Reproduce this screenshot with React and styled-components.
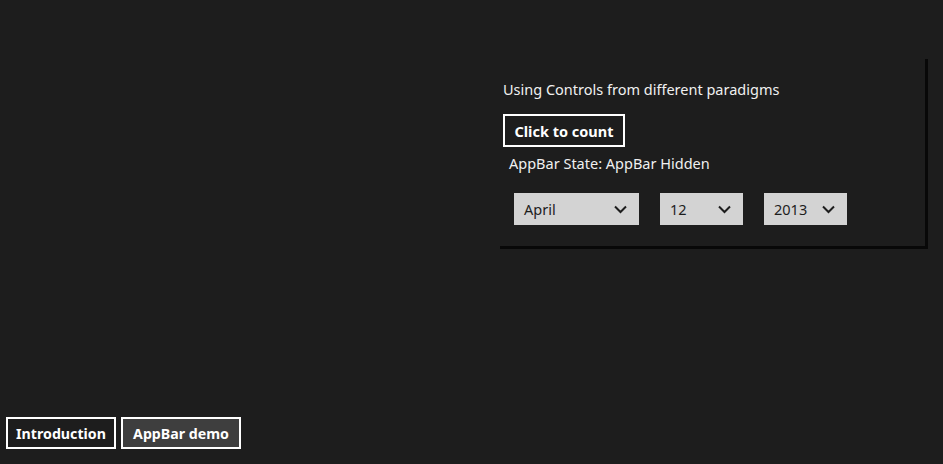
import React, { useState } from 'react'
import styled, { createGlobalStyle } from 'styled-components'

const colors = {
    page: '#1d1d1d',
    shadow: '#080808',
    white: '#ffffff',
    text: '#f0f0f0',
    selectBg: '#d3d3d3',
    selectText: '#1d1d1d',
    activeTab: '#3e3e3e',
}

const GlobalStyle = createGlobalStyle`
    html, body {
        margin: 0;
        padding: 0;
        background: ${colors.page};
        font-family: 'Noto Sans', 'Open Sans', sans-serif;
        color: ${colors.text};
    }
`

const PageComp = styled.div`
    width: 943px;
    height: 464px;
    display: flex;
    flex-direction: column;
    justify-content: space-between;
    box-sizing: border-box;
    padding: 59px 0 15px 0;
`

const PanelComp = styled.div`
    margin-left: 500px;
    width: 428px;
    height: 190px;
    border-right: 3px solid ${colors.shadow};
    border-bottom: 3px solid ${colors.shadow};
    padding: 19px 0 0 3px;
    box-sizing: border-box;
    display: flex;
    flex-direction: column;
    align-items: flex-start;
`

const Title = styled.div`
    font-size: 14.5px;
    line-height: 22px;
    height: 22px;
`

const CountButton = styled.button`
    margin-top: 14px;
    height: 33px;
    width: 122px;
    box-sizing: border-box;
    border: 2px solid ${colors.white};
    background: transparent;
    color: ${colors.white};
    font-family: inherit;
    font-size: 14.5px;
    font-weight: 700;
    padding: 0;
    cursor: pointer;
`

const StateText = styled.div`
    margin: 6px 0 0 6px;
    font-size: 14.5px;
    line-height: 20px;
`

const PickerRow = styled.div`
    display: flex;
    gap: 21px;
    margin: 20px 0 0 11px;
`

const Select = styled.div`
    width: ${props => props.$width}px;
    height: 32px;
    box-sizing: border-box;
    background: ${colors.selectBg};
    color: ${colors.selectText};
    display: flex;
    align-items: center;
    justify-content: space-between;
    padding: 0 12px 0 10px;
    font-size: 14.5px;
`

const NavBar = styled.div`
    display: flex;
    gap: 5px;
    padding-left: 6px;
`

const NavButton = styled.div`
    width: ${props => props.$width}px;
    height: 32px;
    box-sizing: border-box;
    border: 2px solid ${colors.white};
    background-color: ${colors.page};
    color: ${colors.white};
    font-size: 14.2px;
    font-weight: 700;
    display: flex;
    align-items: center;
    justify-content: center;
    cursor: pointer;
`

const ActiveNavButton = styled(NavButton)`
    background-color: ${colors.activeTab};
`

const Chevron = () => (
    <svg width='13' height='9' viewBox='0 0 13 9'>
        <path d='M1 1.5 L6.5 7 L12 1.5' fill='none' stroke='#1d1d1d' strokeWidth='2' />
    </svg>
)

function App() {
    const [count, setCount] = useState(0)

    return (
        <PageComp>
            <GlobalStyle />
            <PanelComp>
                <Title>Using Controls from different paradigms</Title>
                <CountButton onClick={() => setCount(count + 1)}>
                    {count > 0 ? `Clicked ${count}` : 'Click to count'}
                </CountButton>
                <StateText>AppBar State: AppBar Hidden</StateText>
                <PickerRow>
                    <Select $width={125}>April <Chevron /></Select>
                    <Select $width={83}>12 <Chevron /></Select>
                    <Select $width={83}>2013 <Chevron /></Select>
                </PickerRow>
            </PanelComp>
            <NavBar>
                <NavButton $width={110}>Introduction</NavButton>
                <ActiveNavButton $width={120}>AppBar demo</ActiveNavButton>
            </NavBar>
        </PageComp>
    )
}

export default App
